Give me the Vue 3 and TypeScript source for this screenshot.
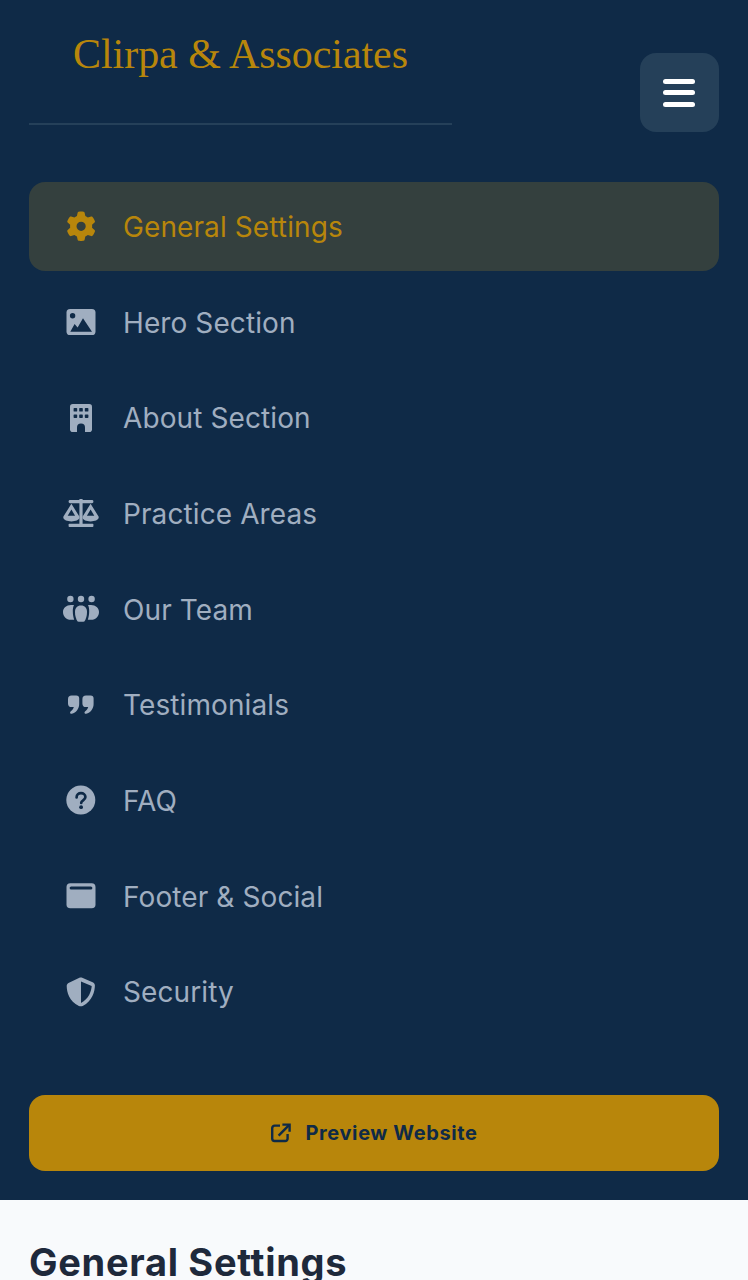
<template>
  <div class="page">
    <aside class="sidebar">
      <div class="top">
        <div class="brand">
          <span class="brand-name">Clirpa &amp; Associates</span>
        </div>
        <button class="toggle" type="button" aria-label="Menu">
          <span></span><span></span><span></span>
        </button>
      </div>

      <nav class="nav">
        <a v-for="item in items" :key="item.label" class="nav-item" :class="{ active: item.active }">
          <svg class="icon" viewBox="0 0 36 30" v-html="item.icon"></svg>
          <span class="label">{{ item.label }}</span>
        </a>
      </nav>

      <button class="preview" type="button">
        <svg class="ext" viewBox="0 0 20 20" fill="none" stroke="currentColor" stroke-width="2.4">
          <path d="M9 2.600H3.600a2.400 2.400 0 0 0-2.400 2.400v10.600A2.400 2.400 0 0 0 3.600 18h10.600a2.400 2.400 0 0 0 2.400-2.400V11" />
          <path d="M7.600 12.600 18 2.200" />
          <path d="M11.400 1.600h7.200v7.200" />
        </svg>
        <span>Preview Website</span>
      </button>
    </aside>

    <main class="content">
      <h1>General Settings</h1>
    </main>
  </div>
</template>

<script setup lang="ts">
interface NavItem {
  label: string;
  icon: string;
  active?: boolean;
}

const dark = "#0f2a47";

const items: NavItem[] = [
  {
    label: "General Settings",
    active: true,
    icon: `<g transform="translate(3.4 0.6) scale(0.0575)"><path fill="currentColor" d="M495.9 166.6c3.2 8.7 .5 18.4-6.4 24.6l-43.3 39.4c1.1 8.3 1.7 16.8 1.7 25.4s-.6 17.1-1.7 25.4l43.3 39.4c6.9 6.2 9.6 15.9 6.4 24.6c-4.4 11.9-9.7 23.3-15.8 34.3l-4.7 8.1c-6.6 11-14 21.4-22.1 31.2c-5.9 7.2-15.7 9.6-24.5 6.8l-55.7-17.7c-13.4 10.3-28.2 18.9-44 25.4l-12.5 57.1c-2 9.1-9 16.3-18.2 17.8c-13.8 2.3-28 3.5-42.5 3.5s-28.7-1.2-42.5-3.5c-9.2-1.5-16.2-8.7-18.2-17.8l-12.5-57.1c-15.8-6.5-30.6-15.1-44-25.4L83.1 425.9c-8.8 2.8-18.6 .3-24.5-6.8c-8.1-9.8-15.5-20.2-22.1-31.2l-4.7-8.1c-6.1-11-11.4-22.4-15.8-34.3c-3.2-8.7-.5-18.4 6.4-24.6l43.3-39.4C64.6 273.1 64 264.6 64 256s.6-17.1 1.7-25.4L22.4 191.2c-6.9-6.2-9.6-15.9-6.4-24.6c4.4-11.9 9.7-23.3 15.8-34.3l4.7-8.1c6.6-11 14-21.4 22.1-31.2c5.9-7.2 15.7-9.6 24.5-6.8l55.7 17.7c13.4-10.3 28.2-18.9 44-25.4l12.5-57.1c2-9.1 9-16.3 18.2-17.8C227.3 1.2 241.5 0 256 0s28.7 1.2 42.5 3.5c9.2 1.5 16.2 8.7 18.2 17.8l12.5 57.1c15.8 6.5 30.6 15.1 44 25.4l55.7-17.7c8.8-2.8 18.6-.3 24.5 6.8c8.1 9.8 15.5 20.2 22.1 31.2l4.7 8.1c6.1 11 11.4 22.4 15.8 34.3zM256 336a80 80 0 1 0 0-160 80 80 0 1 0 0 160z"/></g>`,
  },
  {
    label: "Hero Section",
    icon: `<rect x="3.5" y="2" width="29" height="26" rx="3.6" fill="currentColor"/><circle cx="9.6" cy="8.7" r="2.7" fill="${dark}"/><path fill="${dark}" d="M7.300 24.700 11.600 17l3 3.600L20 11.300l9 13.400z"/>`,
  },
  {
    label: "About Section",
    icon: `<rect x="7" y="1" width="22" height="28" rx="2.800" fill="currentColor"/><g fill="${dark}"><rect x="10.600" y="5" width="3.600" height="3.600" rx=".7"/><rect x="16.200" y="5" width="3.600" height="3.600" rx=".7"/><rect x="21.800" y="5" width="3.600" height="3.600" rx=".7"/><rect x="10.600" y="11.400" width="3.600" height="3.600" rx=".7"/><rect x="16.200" y="11.400" width="3.600" height="3.600" rx=".7"/><rect x="21.800" y="11.400" width="3.600" height="3.600" rx=".7"/><path d="M14 29v-4.400a4 4 0 0 1 8 0V29z"/></g>`,
  },
  {
    label: "Practice Areas",
    icon: `<g fill="currentColor"><rect x="5.600" y="2" width="24.800" height="3.200" rx="1.400"/><rect x="16.400" y="1" width="3.200" height="26"/><rect x="5.600" y="25.800" width="24.800" height="3.200" rx=".8"/><path fill-rule="evenodd" d="M8.400 5.800 .6 18.200a2 2 0 0 0-.3 1.400c.4 2.600 3.900 3.800 8.100 3.800s7.700-1.200 8.100-3.800a2 2 0 0 0-.3-1.400zM8.400 11.400l3.700 6.400H4.700z"/><path fill-rule="evenodd" d="M27.600 5.800 19.800 18.200a2 2 0 0 0-.3 1.400c.4 2.600 3.900 3.800 8.100 3.800s7.700-1.200 8.100-3.800a2 2 0 0 0-.3-1.400zM27.600 11.400l3.700 6.400h-7.400z"/></g>`,
  },
  {
    label: "Our Team",
    icon: `<g fill="currentColor"><circle cx="7.400" cy="5" r="3.200"/><circle cx="18" cy="5" r="3.200"/><circle cx="28.600" cy="5" r="3.200"/><path d="M8 11C3.400 11 0 14 0 18s3 7.800 8 7.800h3.200c-.9-2.600-1.400-5.600-1.400-8.800 0-2.400 .4-4.400 1.200-6z"/><path d="M28 11c4.600 0 8 3 8 7s-3 7.800-8 7.800h-3.200c.9-2.600 1.400-5.600 1.400-8.800 0-2.400-.4-4.400-1.200-6z"/><path d="M18 11.500c3.800 0 6 2.600 6 6.500 0 3.600-.9 7-2.400 9.200-.6 .8-6.600 .8-7.200 0-1.500-2.200-2.400-5.600-2.400-9.200 0-3.900 2.200-6.500 6-6.500z"/></g>`,
  },
  {
    label: "Testimonials",
    icon: `<g fill="currentColor"><path d="M8.600 5.600h4.600a3 3 0 0 1 3 3v5.400c0 4.600-3 8.600-7.400 9.800-1.400 .4-2.400-1.400-1.200-2.400 1.600-1.200 2.800-2.600 3.200-4.400H8.600a3.600 3.600 0 0 1-3.600-3.600V9.200a3.600 3.600 0 0 1 3.600-3.600z"/><path d="M23 5.600h4.600a3 3 0 0 1 3 3v5.400c0 4.600-3 8.600-7.400 9.800-1.400 .4-2.400-1.400-1.200-2.400 1.600-1.200 2.800-2.600 3.200-4.400H23a3.600 3.600 0 0 1-3.600-3.600V9.200A3.600 3.600 0 0 1 23 5.600z"/></g>`,
  },
  {
    label: "FAQ",
    icon: `<circle cx="17.800" cy="15" r="14.500" fill="currentColor"/><path d="M13.600 12.400c0-2.600 2-4.200 4.400-4.200s4.400 1.500 4.400 3.800c0 3.400-4.200 3.200-4.200 6" fill="none" stroke="${dark}" stroke-width="2.700" stroke-linecap="round"/><circle cx="18.100" cy="22.200" r="1.900" fill="${dark}"/>`,
  },
  {
    label: "Footer & Social",
    icon: `<rect x="3.500" y="2.300" width="29" height="25" rx="3.800" fill="currentColor"/><rect x="6.600" y="5.400" width="22.800" height="3.200" rx="1.600" fill="${dark}"/>`,
  },
  {
    label: "Security",
    icon: `<path fill="currentColor" fill-rule="evenodd" d="M17.800 .5c.5 0 1 .1 1.400 .3l10.400 4.400c1.300 .5 2.300 1.800 2.300 3.300-.1 5.600-2.400 15.700-12.200 20.400-1.200 .6-2.600 .6-3.800 0C6.100 24.700 3.800 14.600 3.700 9c0-1.500 1-2.800 2.300-3.300L16.400 .8c.4-.2 .9-.3 1.400-.3zM18 4.500v21.400c7.800-3.800 10.400-11.800 10.700-16.900z"/>`,
  },
];
</script>

<style scoped>
.page {
  height: 1280px;
  overflow: hidden;
  background: #f8fafc;
}

.sidebar {
  height: 1200px;
  box-sizing: border-box;
  padding: 0 29px;
  background: #0f2a47;
  display: flex;
  flex-direction: column;
}

.top {
  display: flex;
  justify-content: space-between;
  align-items: flex-start;
  height: 132px;
}

.brand {
  width: 423px;
  height: 125px;
  box-sizing: border-box;
  padding: 28px 0 0 44px;
  border-bottom: 2px solid #254059;
}

.brand-name {
  display: block;
  font-family: "Liberation Serif", serif;
  font-size: 42px;
  letter-spacing: -0.05px;
  line-height: 52px;
  color: #b8860b;
  white-space: nowrap;
}

.toggle {
  width: 79px;
  height: 79px;
  margin-top: 53px;
  padding: 0 1px 0 0;
  border: 0;
  border-radius: 16px;
  background: #254059;
  display: flex;
  flex-direction: column;
  align-items: center;
  justify-content: center;
  gap: 6.5px;
}

.toggle span {
  width: 32px;
  height: 5px;
  border-radius: 3px;
  background: #fff;
}

.nav {
  margin-top: 50px;
  display: flex;
  flex-direction: column;
  gap: 7px;
}

.nav-item {
  height: 88.7px;
  padding-left: 34px;
  border-radius: 16px;
  display: flex;
  align-items: center;
  gap: 24px;
  font-family: "Inter", sans-serif;
  font-size: 28px;
  letter-spacing: 0.1px;
  color: #a0aec0;
}

.nav-item.active {
  background: #34403e;
  color: #b8860b;
}

.label {
  padding-top: 1px;
}

.icon {
  width: 36px;
  height: 30px;
  flex: none;
}

.preview {
  margin-top: auto;
  margin-bottom: 29px;
  height: 76px;
  flex: none;
  border: 0;
  border-radius: 16px;
  background: #b8860b;
  color: #0f2a47;
  display: flex;
  align-items: center;
  justify-content: center;
  gap: 15px;
  font-family: "Inter", sans-serif;
  font-size: 20px;
  letter-spacing: 0.6px;
  font-weight: 700;
}

.ext {
  width: 20px;
  height: 20px;
}

.content {
  padding: 40px 29px 0;
}

h1 {
  margin: 0;
  font-family: "Inter", sans-serif;
  font-size: 38px;
  letter-spacing: 0.7px;
  line-height: 44px;
  font-weight: 700;
  color: #1e293b;
}
</style>
